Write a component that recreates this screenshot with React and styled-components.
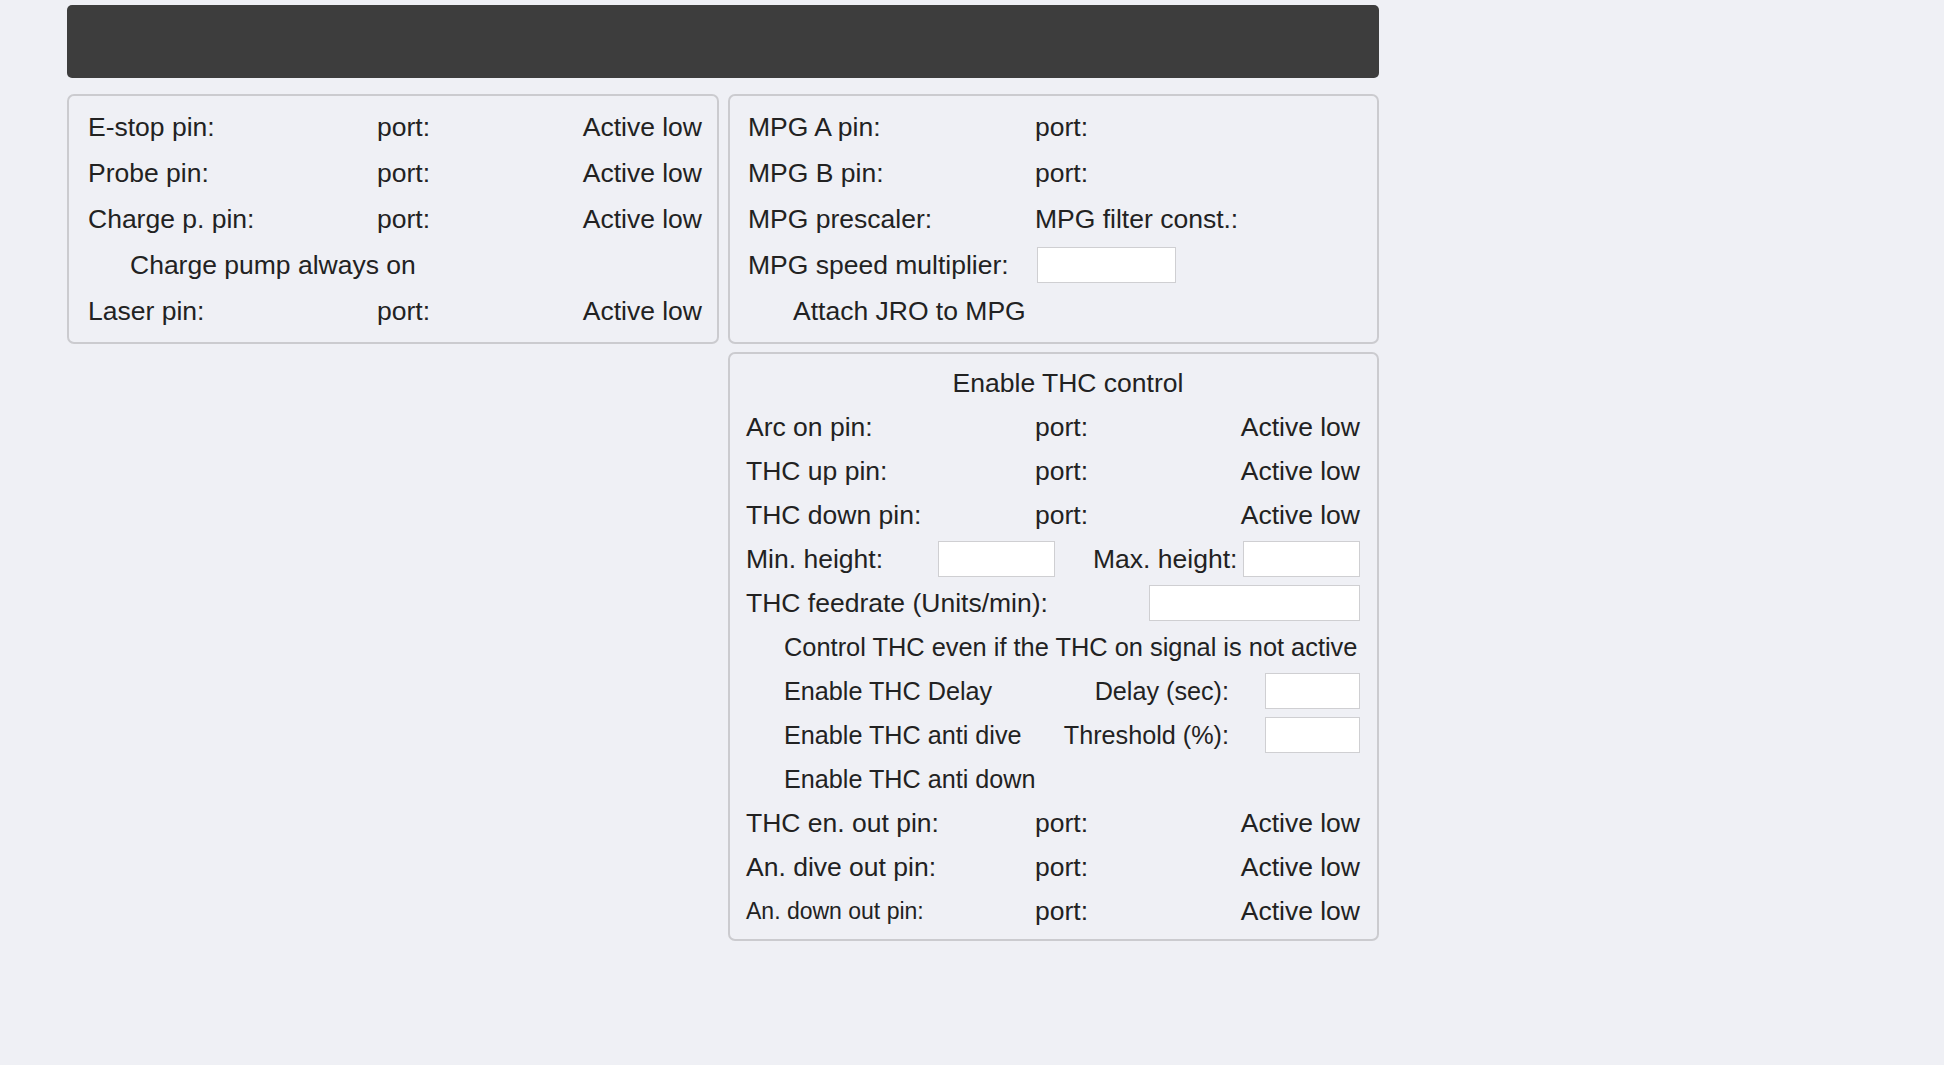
import React from "react";
import styled, { createGlobalStyle } from "styled-components";

const Global = createGlobalStyle`
  html, body { margin: 0; padding: 0; background: #eff0f5; }
  body { font-family: "Liberation Sans", Arial, Helvetica, sans-serif; color: #222; }
  * { box-sizing: border-box; }
`;

const Page = styled.div`
  padding: 5px 0 0 67px;
  width: 1379px;
`;

const TopBar = styled.div`
  height: 73px;
  background: #3d3d3d;
  border-radius: 5px;
  margin-bottom: 16px;
`;

const Columns = styled.div`
  display: grid;
  grid-template-columns: 652px 651px;
  column-gap: 9px;
  align-items: start;
`;

const Stack = styled.div`
  display: flex;
  flex-direction: column;
  gap: 8px;
`;

const Panel = styled.div`
  border: 2px solid #cbcbcf;
  border-radius: 7px;
  padding: ${(p) => p.$pad || "7px 15px 7px 20px"};
  display: flex;
  flex-direction: column;
`;

const Row = styled.div`
  display: flex;
  align-items: center;
  height: ${(p) => p.$h || 46}px;
  font-size: ${(p) => p.$fs || 26.5}px;
  padding-left: ${(p) => p.$indent || 0}px;
  white-space: nowrap;
`;

const CenterRow = styled(Row)`
  justify-content: center;
  padding-left: 30px;
`;

const Label = styled.span`
  width: ${(p) => p.$w}px;
  flex: none;
  font-size: ${(p) => (p.$fs ? `${p.$fs}px` : "inherit")};
`;

const Right = styled.span`
  margin-left: auto;
`;

const Spaced = styled.span`
  margin-left: ${(p) => p.$ml}px;
`;

const Field = styled.div`
  width: ${(p) => p.$w}px;
  height: 36px;
  background: #fff;
  border: 1px solid #cfcfd2;
  flex: none;
  margin-left: ${(p) => (p.$auto ? "auto" : `${p.$ml || 0}px`)};
`;

const PinRow = ({ label, w, fs, h }) => (
  <Row $h={h}>
    <Label $w={w} $fs={fs}>{label}</Label>
    <span>port:</span>
    <Right>Active low</Right>
  </Row>
);

export default function App() {
  return (
    <>
      <Global />
      <Page>
        <TopBar />
        <Columns>
          <Panel $pad="8px 15px 8px 19px">
            <PinRow label="E-stop pin:" w={289} />
            <PinRow label="Probe pin:" w={289} />
            <PinRow label="Charge p. pin:" w={289} />
            <Row $indent={42}>Charge pump always on</Row>
            <PinRow label="Laser pin:" w={289} />
          </Panel>
          <Stack>
            <Panel $pad="8px 15px 8px 18px">
              <Row>
                <Label $w={287}>MPG A pin:</Label>
                <span>port:</span>
              </Row>
              <Row>
                <Label $w={287}>MPG B pin:</Label>
                <span>port:</span>
              </Row>
              <Row>
                <Label $w={287}>MPG prescaler:</Label>
                <span>MPG filter const.:</span>
              </Row>
              <Row>
                <Label $w={289}>MPG speed multiplier:</Label>
                <Field $w={139} />
              </Row>
              <Row $indent={45}>Attach JRO to MPG</Row>
            </Panel>
            <Panel $pad="7px 17px 6px 16px">
              <CenterRow $h={44}>Enable THC control</CenterRow>
              <PinRow label="Arc on pin:" w={289} h={44} />
              <PinRow label="THC up pin:" w={289} h={44} />
              <PinRow label="THC down pin:" w={289} h={44} />
              <Row $h={44}>
                <Label $w={192}>Min. height:</Label>
                <Field $w={117} />
                <Spaced $ml={38}>Max. height:</Spaced>
                <Field $w={117} $auto />
              </Row>
              <Row $h={44}>
                <span>THC feedrate (Units/min):</span>
                <Field $w={211} $auto />
              </Row>
              <Row $h={44} $fs={25.4} $indent={38}>
                Control THC even if the THC on signal is not active
              </Row>
              <Row $h={44} $fs={25.2} $indent={38}>
                <span>Enable THC Delay</span>
                <Right>Delay (sec):</Right>
                <Field $w={95} $ml={36} />
              </Row>
              <Row $h={44} $fs={25.2} $indent={38}>
                <span>Enable THC anti dive</span>
                <Right>Threshold (%):</Right>
                <Field $w={95} $ml={36} />
              </Row>
              <Row $h={44} $fs={25.2} $indent={38}>
                Enable THC anti down
              </Row>
              <PinRow label="THC en. out pin:" w={289} h={44} />
              <PinRow label="An. dive out pin:" w={289} h={44} />
              <PinRow label="An. down out pin:" w={289} h={44} fs={23} />
            </Panel>
          </Stack>
        </Columns>
      </Page>
    </>
  );
}
